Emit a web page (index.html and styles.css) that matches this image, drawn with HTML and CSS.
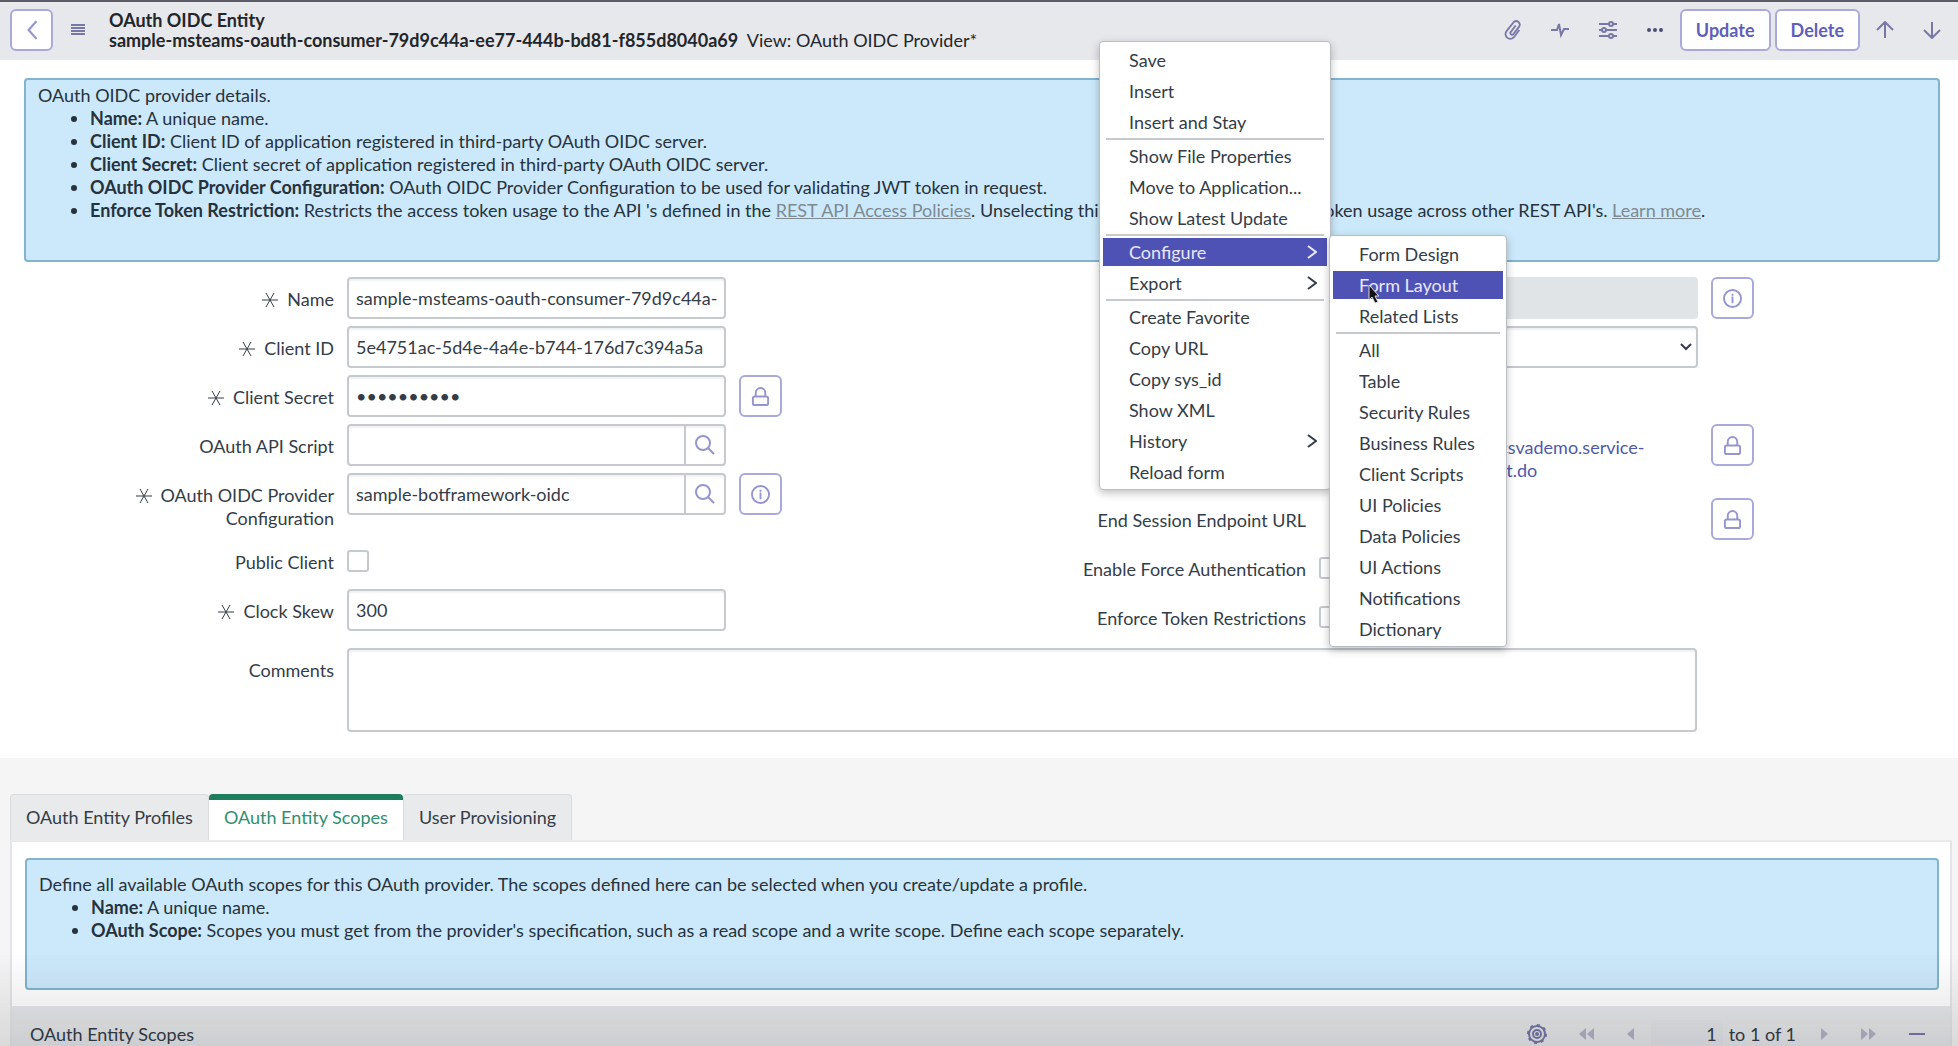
FILE: index.html
```html
<!DOCTYPE html>
<html lang="en">
<head>
    <meta charset="UTF-8">
    <meta name="viewport" content="width=device-width, initial-scale=1.0">
    <title>OAuth OIDC Entity</title>
    <link rel="stylesheet" href="styles.css">
</head>
<body>
    <!-- Shared icons -->
    <svg class="sprite" aria-hidden="true">
        <symbol id="i-star" viewBox="0 0 16 16"><path d="M0 8h16M4 1l8 14M12 1L4 15"/></symbol>
        <symbol id="i-lock" viewBox="0 0 20 20"><rect x="2" y="10" width="16" height="9" rx="2"/><path d="M5 10V6a5 5 0 0 1 10 0v4"/></symbol>
        <symbol id="i-info" viewBox="0 0 20 20"><circle cx="10" cy="10" r="9"/><path d="M10 8v7M10 5v2"/></symbol>
        <symbol id="i-search" viewBox="0 0 20 20"><circle cx="8" cy="8" r="7"/><path d="M13 13l6 6"/></symbol>
        <symbol id="i-chevron" viewBox="0 0 10 14"><path d="M1 1l8 6-8 6"/></symbol>
        <symbol id="i-up" viewBox="0 0 18 18"><path d="M9 17V1M1 9l8-8 8 8"/></symbol>
        <symbol id="i-down" viewBox="0 0 18 18"><path d="M9 1v16M1 9l8 8 8-8"/></symbol>
    </svg>

    <header class="topbar">
        <button class="btn btn-icon" aria-label="Back"><svg class="icon back-icon" viewBox="0 0 10 18"><path d="M9 1L2 9l7 8"/></svg></button>
        <button class="btn-plain menu-btn" aria-label="Menu"><svg class="icon" width="14" height="14" viewBox="0 0 14 14"><path d="M0 2h14M0 5h14M0 8h14M0 11h14"/></svg></button>
        <div class="title">
            <h1>OAuth OIDC Entity</h1>
            <p><strong>sample-msteams-oauth-consumer-79d9c44a-ee77-444b-bd81-f855d8040a69</strong> <span class="view">View: OAuth OIDC Provider*</span></p>
        </div>
        <div class="tools">
            <button class="btn-plain" aria-label="Attachments"><svg class="icon" width="18" height="20" viewBox="0 0 20 22"><path d="M13 6l-6 8a2 2 0 0 0 3 2l7-9a4 4 0 0 0-6-5L3 12a5 5 0 0 0 8 7l6-8"/></svg></button>
            <button class="btn-plain" aria-label="Activity"><svg class="icon" width="20" height="20" viewBox="0 0 20 20"><path d="M1 10h6l2-6 2 11 3-6h5"/></svg></button>
            <button class="btn-plain" aria-label="Personalize"><svg class="icon" width="20" height="20" viewBox="0 0 20 20"><path d="M1 4h10M15 4h4M1 10h3M8 10h11M1 16h10M15 16h4"/><circle cx="13" cy="4" r="2"/><circle cx="6" cy="10" r="2"/><circle cx="13" cy="16" r="2"/></svg></button>
            <button class="btn-plain" aria-label="More"><svg class="icon dots" width="18" height="6" viewBox="0 0 18 6"><circle cx="3" cy="3" r="2"/><circle cx="9" cy="3" r="2"/><circle cx="15" cy="3" r="2"/></svg></button>
        </div>
        <button class="btn">Update</button>
        <button class="btn">Delete</button>
        <div class="record-nav">
            <button class="btn-plain" aria-label="Previous"><svg class="icon" width="18" height="18"><use href="#i-up"/></svg></button>
            <button class="btn-plain" aria-label="Next"><svg class="icon" width="18" height="18"><use href="#i-down"/></svg></button>
        </div>
    </header>

    <main>
        <section class="record">
            <div class="message">
                <p>OAuth OIDC provider details.</p>
                <ul>
                    <li><b>Name:</b> A unique name.</li>
                    <li><b>Client ID:</b> Client ID of application registered in third-party OAuth OIDC server.</li>
                    <li><b>Client Secret:</b> Client secret of application registered in third-party OAuth OIDC server.</li>
                    <li><b>OAuth OIDC Provider Configuration:</b> OAuth OIDC Provider Configuration to be used for validating JWT token in request.</li>
                    <li><b>Enforce Token Restriction:</b> Restricts the access token usage to the API 's defined in the <a href="#">REST API Access Policies</a>. Unselecting this option enables the access token usage across other REST API's. <a href="#">Learn more</a>.</li>
                </ul>
            </div>

            <form class="form">
                <div class="column">
                    <div class="row">
                        <label for="name"><svg class="star"><use href="#i-star"/></svg>Name</label>
                        <input class="control" type="text" id="name" value="sample-msteams-oauth-consumer-79d9c44a-ee77-444b-bd81-f855d8040a69">
                    </div>
                    <div class="row">
                        <label for="clientId"><svg class="star"><use href="#i-star"/></svg>Client ID</label>
                        <input class="control" type="text" id="clientId" value="5e4751ac-5d4e-4a4e-b744-176d7c394a5a">
                    </div>
                    <div class="row">
                        <label for="secret"><svg class="star"><use href="#i-star"/></svg>Client Secret</label>
                        <input class="control" type="password" id="secret" value="0123456789">
                        <button type="button" class="btn btn-icon" aria-label="Unlock secret"><svg class="icon"><use href="#i-lock"/></svg></button>
                    </div>
                    <div class="row">
                        <label for="script">OAuth API Script</label>
                        <div class="control lookup">
                            <input type="text" id="script">
                            <button type="button" aria-label="Look up script"><svg class="icon"><use href="#i-search"/></svg></button>
                        </div>
                    </div>
                    <div class="row">
                        <label for="config"><svg class="star"><use href="#i-star"/></svg>OAuth OIDC Provider<br>Configuration</label>
                        <div class="control lookup">
                            <input type="text" id="config" value="sample-botframework-oidc">
                            <button type="button" aria-label="Look up configuration"><svg class="icon"><use href="#i-search"/></svg></button>
                        </div>
                        <button type="button" class="btn btn-icon" aria-label="Preview configuration"><svg class="icon"><use href="#i-info"/></svg></button>
                    </div>
                    <div class="row">
                        <label for="public">Public Client</label>
                        <input type="checkbox" id="public">
                    </div>
                    <div class="row">
                        <label for="skew"><svg class="star"><use href="#i-star"/></svg>Clock Skew</label>
                        <input class="control" type="text" id="skew" value="300">
                    </div>
                </div>

                <div class="column">
                    <div class="row">
                        <label for="app">Application</label>
                        <input class="control" type="text" id="app" value="Global" readonly>
                        <button type="button" class="btn btn-icon" aria-label="Preview application"><svg class="icon"><use href="#i-info"/></svg></button>
                    </div>
                    <div class="row">
                        <label for="access">Accessible from</label>
                        <div class="select">
                            <select class="control" id="access">
                                <option>All scopes</option>
                            </select>
                            <svg class="icon" viewBox="0 0 12 8"><path d="M1 1l5 5 5-5"/></svg>
                        </div>
                    </div>
                    <div class="row">
                        <label for="active">Active</label>
                        <input type="checkbox" id="active">
                    </div>
                    <div class="row">
                        <span class="label">Redirect URL</span>
                        <a class="url" href="#">https://virtualagenttestcsvademo.service-<br>now.com/oauth_redirect.do</a>
                        <button type="button" class="btn btn-icon" aria-label="Unlock redirect URL"><svg class="icon"><use href="#i-lock"/></svg></button>
                    </div>
                    <div class="row">
                        <span class="label">End Session Endpoint URL</span>
                        <span></span>
                        <button type="button" class="btn btn-icon" aria-label="Unlock end session URL"><svg class="icon"><use href="#i-lock"/></svg></button>
                    </div>
                    <div class="row">
                        <label for="force">Enable Force Authentication</label>
                        <input type="checkbox" id="force">
                    </div>
                    <div class="row">
                        <label for="enforce">Enforce Token Restrictions</label>
                        <input type="checkbox" id="enforce">
                    </div>
                </div>

                <div class="row row-wide">
                    <label for="comments">Comments</label>
                    <textarea class="control" id="comments"></textarea>
                </div>
            </form>
        </section>

        <section class="related">
            <div class="tabs" role="tablist">
                <button role="tab">OAuth Entity Profiles</button>
                <button role="tab" class="active" aria-selected="true">OAuth Entity Scopes</button>
                <button role="tab">User Provisioning</button>
            </div>
            <div class="panel">
                <div class="message message-short">
                    <p>Define all available OAuth scopes for this OAuth provider. The scopes defined here can be selected when you create/update a profile.</p>
                    <ul>
                        <li><b>Name:</b> A unique name.</li>
                        <li><b>OAuth Scope:</b> Scopes you must get from the provider's specification, such as a read scope and a write scope. Define each scope separately.</li>
                    </ul>
                </div>
                <div class="list-header">
                    <h2>OAuth Entity Scopes</h2>
                    <button class="btn-plain" aria-label="List settings"><svg class="icon gear" width="20" height="20" viewBox="0 0 20 20"><circle cx="10" cy="10" r="8"/><circle cx="10" cy="10" r="9" stroke-dasharray="3 4"/><circle cx="10" cy="10" r="4"/><circle cx="10" cy="10" r="1"/></svg></button>
                    <button class="btn-plain pale" aria-label="First page"><svg width="16" height="12" viewBox="0 0 16 12"><path d="M7 0v12L0 6zM15 0v12L8 6z"/></svg></button>
                    <button class="btn-plain pale" aria-label="Previous page"><svg width="8" height="12" viewBox="0 0 8 12"><path d="M7 0v12L0 6z"/></svg></button>
                    <label class="pager"><input type="text" value="1" aria-label="Row"> to 1 of 1</label>
                    <button class="btn-plain pale" aria-label="Next page"><svg width="8" height="12" viewBox="0 0 8 12"><path d="M1 0v12l7-6z"/></svg></button>
                    <button class="btn-plain pale" aria-label="Last page"><svg width="16" height="12" viewBox="0 0 16 12"><path d="M1 0v12l7-6zM9 0v12l7-6z"/></svg></button>
                    <button class="btn-plain" aria-label="Collapse"><svg class="icon" width="18" height="4" viewBox="0 0 18 4"><path d="M1 2h16"/></svg></button>
                </div>
            </div>
        </section>
    </main>

    <!-- Header context menu -->
    <ul class="menu context-menu">
        <li><button>Save</button></li>
        <li><button>Insert</button></li>
        <li><button>Insert and Stay</button></li>
        <li class="separator"></li>
        <li><button>Show File Properties</button></li>
        <li><button>Move to Application...</button></li>
        <li><button>Show Latest Update</button></li>
        <li class="separator"></li>
        <li class="has-submenu">
            <button class="selected">Configure<svg class="icon arrow"><use href="#i-chevron"/></svg></button>
            <ul class="menu submenu">
                <li><button>Form Design</button></li>
                <li><button class="selected">Form Layout</button></li>
                <li><button>Related Lists</button></li>
                <li class="separator"></li>
                <li><button>All</button></li>
                <li><button>Table</button></li>
                <li><button>Security Rules</button></li>
                <li><button>Business Rules</button></li>
                <li><button>Client Scripts</button></li>
                <li><button>UI Policies</button></li>
                <li><button>Data Policies</button></li>
                <li><button>UI Actions</button></li>
                <li><button>Notifications</button></li>
                <li><button>Dictionary</button></li>
            </ul>
        </li>
        <li><button>Export<svg class="icon arrow"><use href="#i-chevron"/></svg></button></li>
        <li class="separator"></li>
        <li><button>Create Favorite</button></li>
        <li><button>Copy URL</button></li>
        <li><button>Copy sys_id</button></li>
        <li><button>Show XML</button></li>
        <li><button>History<svg class="icon arrow"><use href="#i-chevron"/></svg></button></li>
        <li><button>Reload form</button></li>
    </ul>
    <svg class="pointer" viewBox="0 0 12 20"><path d="M1 1v15l3-3 3 6 3-1-3-6h4z"/></svg>
</body>
</html>
```
FILE: styles.css
```css
* {
    box-sizing: border-box;
}
body {
    display: flex;
    flex-direction: column;
    height: 100vh;
    margin: 0;
    overflow: hidden;
    font-family: Lato, sans-serif;
    font-size: 18px;
    line-height: 23px;
    color: #343d47;
    background-color: #f5f5f5;
}
/* shade along the bottom of the window */
body::after {
    content: "";
    position: fixed;
    left: 0;
    right: 0;
    bottom: 0;
    height: 96px;
    background: linear-gradient(rgba(0, 0, 0, 0), rgba(0, 0, 0, 0.11));
    pointer-events: none;
}
h1, h2, p, ul {
    margin: 0;
    padding: 0;
}
button, input, select, textarea {
    font: inherit;
    color: inherit;
}
button {
    cursor: pointer;
}
.sprite {
    display: none;
}
.icon {
    display: block;
    fill: none;
    stroke: currentColor;
    stroke-width: 2;
}

/* Buttons */
.btn {
    height: 42px;
    padding: 0 14px;
    border: 2px solid #a9a9dc;
    border-radius: 6px;
    background-color: #fff;
    color: #5f5fbb;
    font-weight: bold;
}
.btn-icon {
    display: flex;
    align-items: center;
    justify-content: center;
    width: 43px;
    padding: 0;
    color: #9595cf;
}
.btn-icon .icon {
    width: 19px;
    height: 19px;
}
.btn-plain {
    display: flex;
    padding: 0;
    border: 0;
    background: none;
    color: #7878a8;
}

/* Top bar */
.topbar {
    display: flex;
    flex: none;
    align-items: center;
    gap: 4px;
    height: 60px;
    padding: 0 17px 2px 10px;
    border-top: 2px solid #5c5c66;
    background-color: #e7e8eb;
}
.topbar .back-icon {
    width: 12px;
    height: 20px;
}
.menu-btn {
    margin: 0 20px 0 14px;
}
.title {
    flex: 1;
    line-height: 20px;
    color: #22262b;
}
.title h1 {
    font-size: 18px;
}
.title .view {
    margin-left: 4px;
}
.tools {
    display: flex;
    align-items: center;
    gap: 28px;
    margin-right: 12px;
}
.tools .dots {
    fill: currentColor;
    stroke: none;
    color: #4c4c78;
}
.record-nav {
    display: flex;
    gap: 29px;
    margin-left: 12px;
}

/* Record */
.record {
    padding: 18px 0 26px;
    background-color: #fff;
}
.message {
    min-height: 184px;
    margin: 0 18px 0 24px;
    padding: 4px 12px;
    border: 2px solid #80b4cf;
    border-radius: 4px;
    background-color: #cce9fb;
    color: #26323c;
}
.message ul {
    padding-left: 52px;
}
.message a {
    color: #7d8a92;
}
.form {
    display: grid;
    grid-template-columns: 1fr 1fr;
    padding: 15px 14px 0 0;
}
.column {
    display: flex;
    flex-direction: column;
    gap: 7px;
}
.row {
    display: grid;
    grid-template-columns: 334fr 379fr 233fr;
    column-gap: 13px;
    align-items: start;
    min-height: 42px;
}
.row label,
.row .label {
    padding: 11px 0 3px;
    text-align: right;
}
.row-wide {
    grid-column: 1 / 3;
    grid-template-columns: 334fr 1350fr 234fr;
    padding-top: 10px;
}
.star {
    width: 16px;
    height: 16px;
    margin-right: 9px;
    vertical-align: -2px;
    stroke: currentColor;
    stroke-width: 1;
}
.control {
    width: 100%;
    min-width: 0;
    height: 42px;
    padding: 0 7px;
    border: 2px solid #c6c9ce;
    border-radius: 4px;
    background-color: #fff;
    box-shadow: inset 0 2px 2px rgba(0, 0, 0, 0.06);
}
.control[readonly] {
    border-color: #e1e4e7;
    background-color: #e1e4e7;
    box-shadow: none;
}
textarea.control {
    display: block;
    height: 84px;
    resize: none;
}
.lookup {
    display: flex;
    padding: 0;
}
.lookup input {
    flex: 1;
    min-width: 0;
    padding: 0 7px;
    border: 0;
    background: none;
}
.lookup button {
    width: 40px;
    padding: 0 9px;
    border: 0;
    border-left: 2px solid #c6c9ce;
    background: none;
    color: #9595cf;
}
.lookup .icon {
    width: 20px;
    height: 20px;
}
.select {
    position: relative;
}
.select select {
    appearance: none;
}
.select .icon {
    position: absolute;
    top: 17px;
    right: 6px;
    width: 12px;
    height: 8px;
}
input[type="checkbox"] {
    appearance: none;
    width: 22px;
    height: 22px;
    margin: 10px 0;
    border: 2px solid #c6c9ce;
    border-radius: 3px;
    background-color: #fff;
}
.url {
    padding: 12px 0 9px;
    color: #4e5aa8;
    text-decoration: none;
}

/* Related lists */
.related {
    padding: 36px 6px 0 10px;
}
.tabs {
    display: flex;
}
.tabs button {
    height: 46px;
    padding: 0 15px;
    border: 1px solid #d9dbdf;
    border-bottom: 0;
    border-radius: 4px 4px 0 0;
    background-color: #e9eaec;
}
.tabs .active {
    padding-bottom: 6px;
    border: 0;
    border-top: 6px solid #1f7d5e;
    background-color: #fff;
    color: #2f9070;
}
.panel {
    border: 2px solid #e4e5e8;
    border-top-color: #e9eaec;
    border-bottom: 0;
    background-color: #fff;
}
.message-short {
    min-height: 132px;
    margin: 16px 11px 16px 13px;
    padding: 13px 12px;
}
.list-header {
    display: flex;
    align-items: center;
    height: 56px;
    padding: 0 24px 0 18px;
    background-color: #e7e8eb;
}
.list-header h2 {
    flex: 1;
    font-size: 18px;
    font-weight: normal;
}
.list-header .btn-plain {
    margin-right: 32px;
}
.list-header .btn-plain:last-child {
    margin-right: 0;
}
.pale {
    fill: #b3b3c8;
}
.pager {
    display: flex;
    align-items: center;
    gap: 6px;
    margin: 0 24px 0 -16px;
}
.pager input {
    width: 72px;
    height: 28px;
    padding: 0 6px;
    border: 0;
    border-radius: 4px;
    background-color: #e4e5ea;
    text-align: right;
}

/* Menus */
.menu {
    position: absolute;
    padding: 3px 3px 1px;
    border: 1px solid #b9bec5;
    border-radius: 4px;
    background-color: #fff;
    box-shadow: 0 3px 8px rgba(0, 0, 0, 0.25);
    list-style: none;
}
.context-menu {
    top: 41px;
    left: 1099px;
    width: 232px;
}
.submenu {
    top: -2px;
    left: 226px;
    width: 178px;
}
.has-submenu {
    position: relative;
}
.menu li {
    padding: 1px 0 2px;
}
.menu button {
    display: flex;
    align-items: center;
    justify-content: space-between;
    width: 100%;
    height: 28px;
    padding: 0 10px 0 26px;
    border: 0;
    background: none;
}
.menu .selected {
    background-color: #4f52b5;
    color: #e8e8ff;
}
.menu .separator {
    height: 2px;
    margin: 0 3px 1px;
    padding: 0;
    background-color: #c6c9ce;
}
.arrow {
    width: 10px;
    height: 14px;
}
.pointer {
    position: absolute;
    top: 284px;
    left: 1368px;
    width: 12px;
    height: 20px;
    fill: #111;
    stroke: #ddd;
    stroke-width: 1;
}
```
